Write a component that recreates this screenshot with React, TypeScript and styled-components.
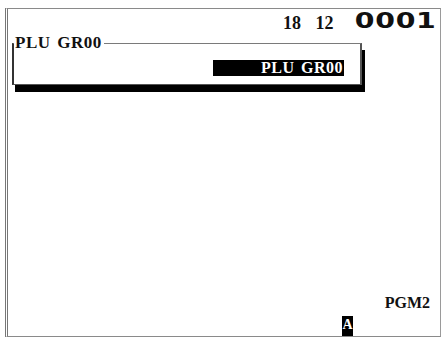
import styled, { createGlobalStyle } from "styled-components";

const GlobalStyle = createGlobalStyle`
  html, body {
    margin: 0;
    padding: 0;
    background: #fff;
  }
  body {
    width: 445px;
    height: 337px;
    overflow: hidden;
    font-family: "Liberation Serif", "DejaVu Serif", serif;
    color: #111;
  }
`;

const App = () => {
  return (
    <>
      <GlobalStyle />
      <Page>
        <Screen>
          <StatusBar>
            <DateText>18 12</DateText>
            <Counter>0001</Counter>
          </StatusBar>
          <Window>
            <Title>PLU GR00</Title>
            <WindowBody>
              <Selected>PLU GR00</Selected>
            </WindowBody>
          </Window>
          <Spacer />
          <ModeRow>PGM2</ModeRow>
          <CursorRow>
            <Cursor>A</Cursor>
          </CursorRow>
        </Screen>
      </Page>
    </>
  );
};

const Page = styled.div`
  padding: 8px 4px 0 5px;
  height: 337px;
  box-sizing: border-box;
`;

const Screen = styled.div`
  display: flex;
  flex-direction: column;
  height: 329px;
  box-sizing: border-box;
  border-top: 1px solid #8a8a8a;
  border-right: 1px solid #9a9a9a;
  border-bottom: 1px solid #8a8a8a;
  border-left: 3px double #777;
`;

const StatusBar = styled.div`
  display: flex;
  justify-content: flex-end;
  align-items: baseline;
  height: 20px;
  padding: 2px 4px 0 0;
`;

const DateText = styled.span`
  font-size: 18px;
  font-weight: bold;
  word-spacing: 10px;
  line-height: 20px;
  transform: scaleY(1.1);
`;

const Counter = styled.span`
  display: inline-block;
  margin-left: 42px;
  font-family: "DejaVu Sans", sans-serif;
  font-size: 21px;
  font-weight: 900;
  line-height: 20px;
  letter-spacing: 0.5px;
  transform: scaleX(1.35);
  transform-origin: right center;
`;

const Window = styled.fieldset`
  margin: 4px 0 0 4px;
  padding: 0;
  width: 350px;
  min-inline-size: 0;
  box-sizing: border-box;
  border-top: 1px solid #7a7a7a;
  border-left: 2px solid #333;
  border-right: 2px solid #555;
  border-bottom: 1px solid #555;
  box-shadow: 3px 7px 0 #000;
`;

const Title = styled.legend`
  padding: 0 2px 0 1px;
  margin: 0;
  font-size: 17px;
  font-weight: bold;
  letter-spacing: 0.5px;
  word-spacing: 2px;
  line-height: 16px;
`;

const WindowBody = styled.div`
  display: flex;
  justify-content: flex-end;
  padding: 9px 16px 8px 0;
`;

const Selected = styled.div`
  width: 131px;
  height: 16px;
  box-sizing: border-box;
  background: #000;
  color: #fff;
  text-align: right;
  font-size: 16px;
  font-weight: bold;
  line-height: 16px;
  padding-right: 1px;
  letter-spacing: 0.5px;
  word-spacing: 2px;
`;

const Spacer = styled.div`
  flex: 1;
`;

const ModeRow = styled.div`
  text-align: right;
  padding-right: 10px;
  font-size: 16px;
  font-weight: bold;
  line-height: 18px;
  margin-bottom: 4px;
`;

const CursorRow = styled.div`
  display: flex;
  padding-left: 334px;
`;

const Cursor = styled.span`
  display: inline-block;
  width: 11px;
  height: 20px;
  background: #000;
  color: #fff;
  font-size: 14px;
  font-weight: bold;
  line-height: 18px;
  text-align: center;
`;

export default App;
